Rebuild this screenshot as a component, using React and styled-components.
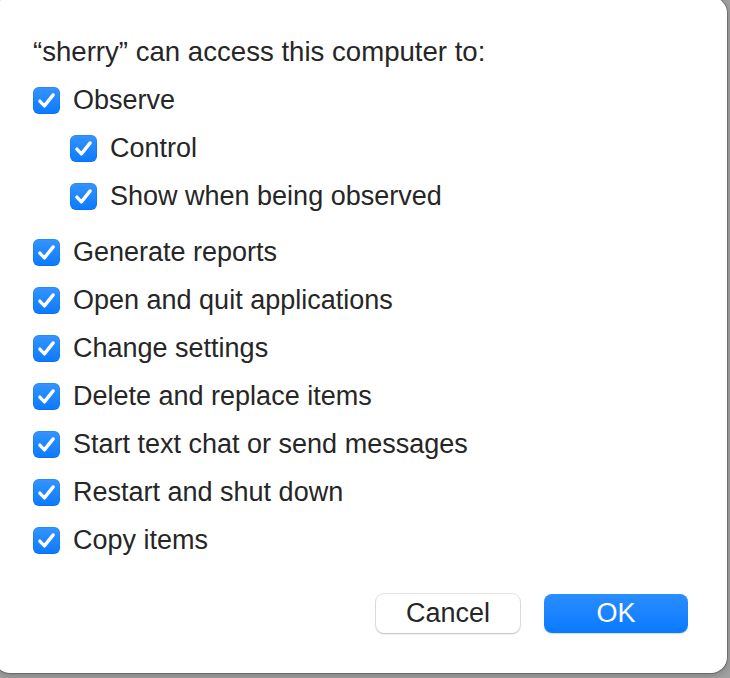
import React from "react";
import styled, { createGlobalStyle } from "styled-components";

const Global = createGlobalStyle`
  html, body { margin: 0; padding: 0; }
  body {
    background: #a2a2a2;
    width: 730px;
    height: 678px;
    overflow: hidden;
    font-family: "Liberation Sans", Arial, sans-serif;
    -webkit-font-smoothing: antialiased;
  }
`;

const Dialog = styled.div`
  box-sizing: border-box;
  width: 733px;
  height: 676px;
  margin: -3px 0 0 -6px;
  padding: 31px 0 0 39px;
  background: #ffffff;
  border-radius: 16px;
  box-shadow: 0 0 0 1px rgba(0, 0, 0, 0.22), 0 2px 8px rgba(0, 0, 0, 0.25);
  color: #262626;
  display: flex;
  flex-direction: column;
`;

const Title = styled.div`
  font-size: 27.6px;
  line-height: 48px;
  height: 48px;
  white-space: nowrap;
`;

const List = styled.div`
  display: flex;
  flex-direction: column;
`;

const Group = styled.div`
  display: flex;
  flex-direction: column;
  margin-bottom: ${(p) => (p.$gap ? "8px" : "0")};
`;

const Row = styled.label`
  display: flex;
  align-items: center;
  height: 48px;
  padding-left: ${(p) => (p.$indent ? "37px" : "0")};
  font-size: 27px;
  white-space: nowrap;
`;

const Box = styled.span`
  flex: none;
  width: 27px;
  height: 27px;
  margin-right: 13px;
  border-radius: 6px;
  background: linear-gradient(180deg, #3594ff 0%, #0a7aff 100%);
  box-shadow: inset 0 0 0 0.5px rgba(0, 60, 160, 0.25);
  display: flex;
  align-items: center;
  justify-content: center;
`;

const Footer = styled.div`
  display: flex;
  justify-content: flex-end;
  gap: 24px;
  margin-top: 30px;
  padding-right: 39px;
`;

const Button = styled.button`
  width: 144px;
  height: 39px;
  border-radius: 8px;
  font-family: "Liberation Sans", Arial, sans-serif;
  font-size: 27px;
  padding: 0;
  cursor: pointer;
  border: none;
  color: ${(p) => (p.$primary ? "#ffffff" : "#262626")};
  background: ${(p) =>
    p.$primary
      ? "linear-gradient(180deg, #2b8dff 0%, #0a7aff 100%)"
      : "#ffffff"};
  box-shadow: ${(p) =>
    p.$primary
      ? "0 0.5px 1px rgba(0,0,0,0.15)"
      : "0 0 0 1px rgba(0,0,0,0.10), 0 1px 2px rgba(0,0,0,0.18)"};
`;

const Check = () => (
  <Box>
    <svg width="27" height="27" viewBox="0 0 26 26">
      <path
        d="M6.6 13.6 L11 18.2 L19.4 7.6"
        fill="none"
        stroke="#ffffff"
        strokeWidth="3.2"
        strokeLinecap="round"
        strokeLinejoin="round"
      />
    </svg>
  </Box>
);

const Item = ({ children, indent }) => (
  <Row $indent={indent}>
    <Check />
    {children}
  </Row>
);

export default function App() {
  return (
    <>
      <Global />
      <Dialog>
        <Title>“sherry” can access this computer to:</Title>
        <List>
          <Group $gap>
            <Item>Observe</Item>
            <Item indent>Control</Item>
            <Item indent>Show when being observed</Item>
          </Group>
          <Group>
            <Item>Generate reports</Item>
            <Item>Open and quit applications</Item>
            <Item>Change settings</Item>
            <Item>Delete and replace items</Item>
            <Item>Start text chat or send messages</Item>
            <Item>Restart and shut down</Item>
            <Item>Copy items</Item>
          </Group>
        </List>
        <Footer>
          <Button>Cancel</Button>
          <Button $primary>OK</Button>
        </Footer>
      </Dialog>
    </>
  );
}
